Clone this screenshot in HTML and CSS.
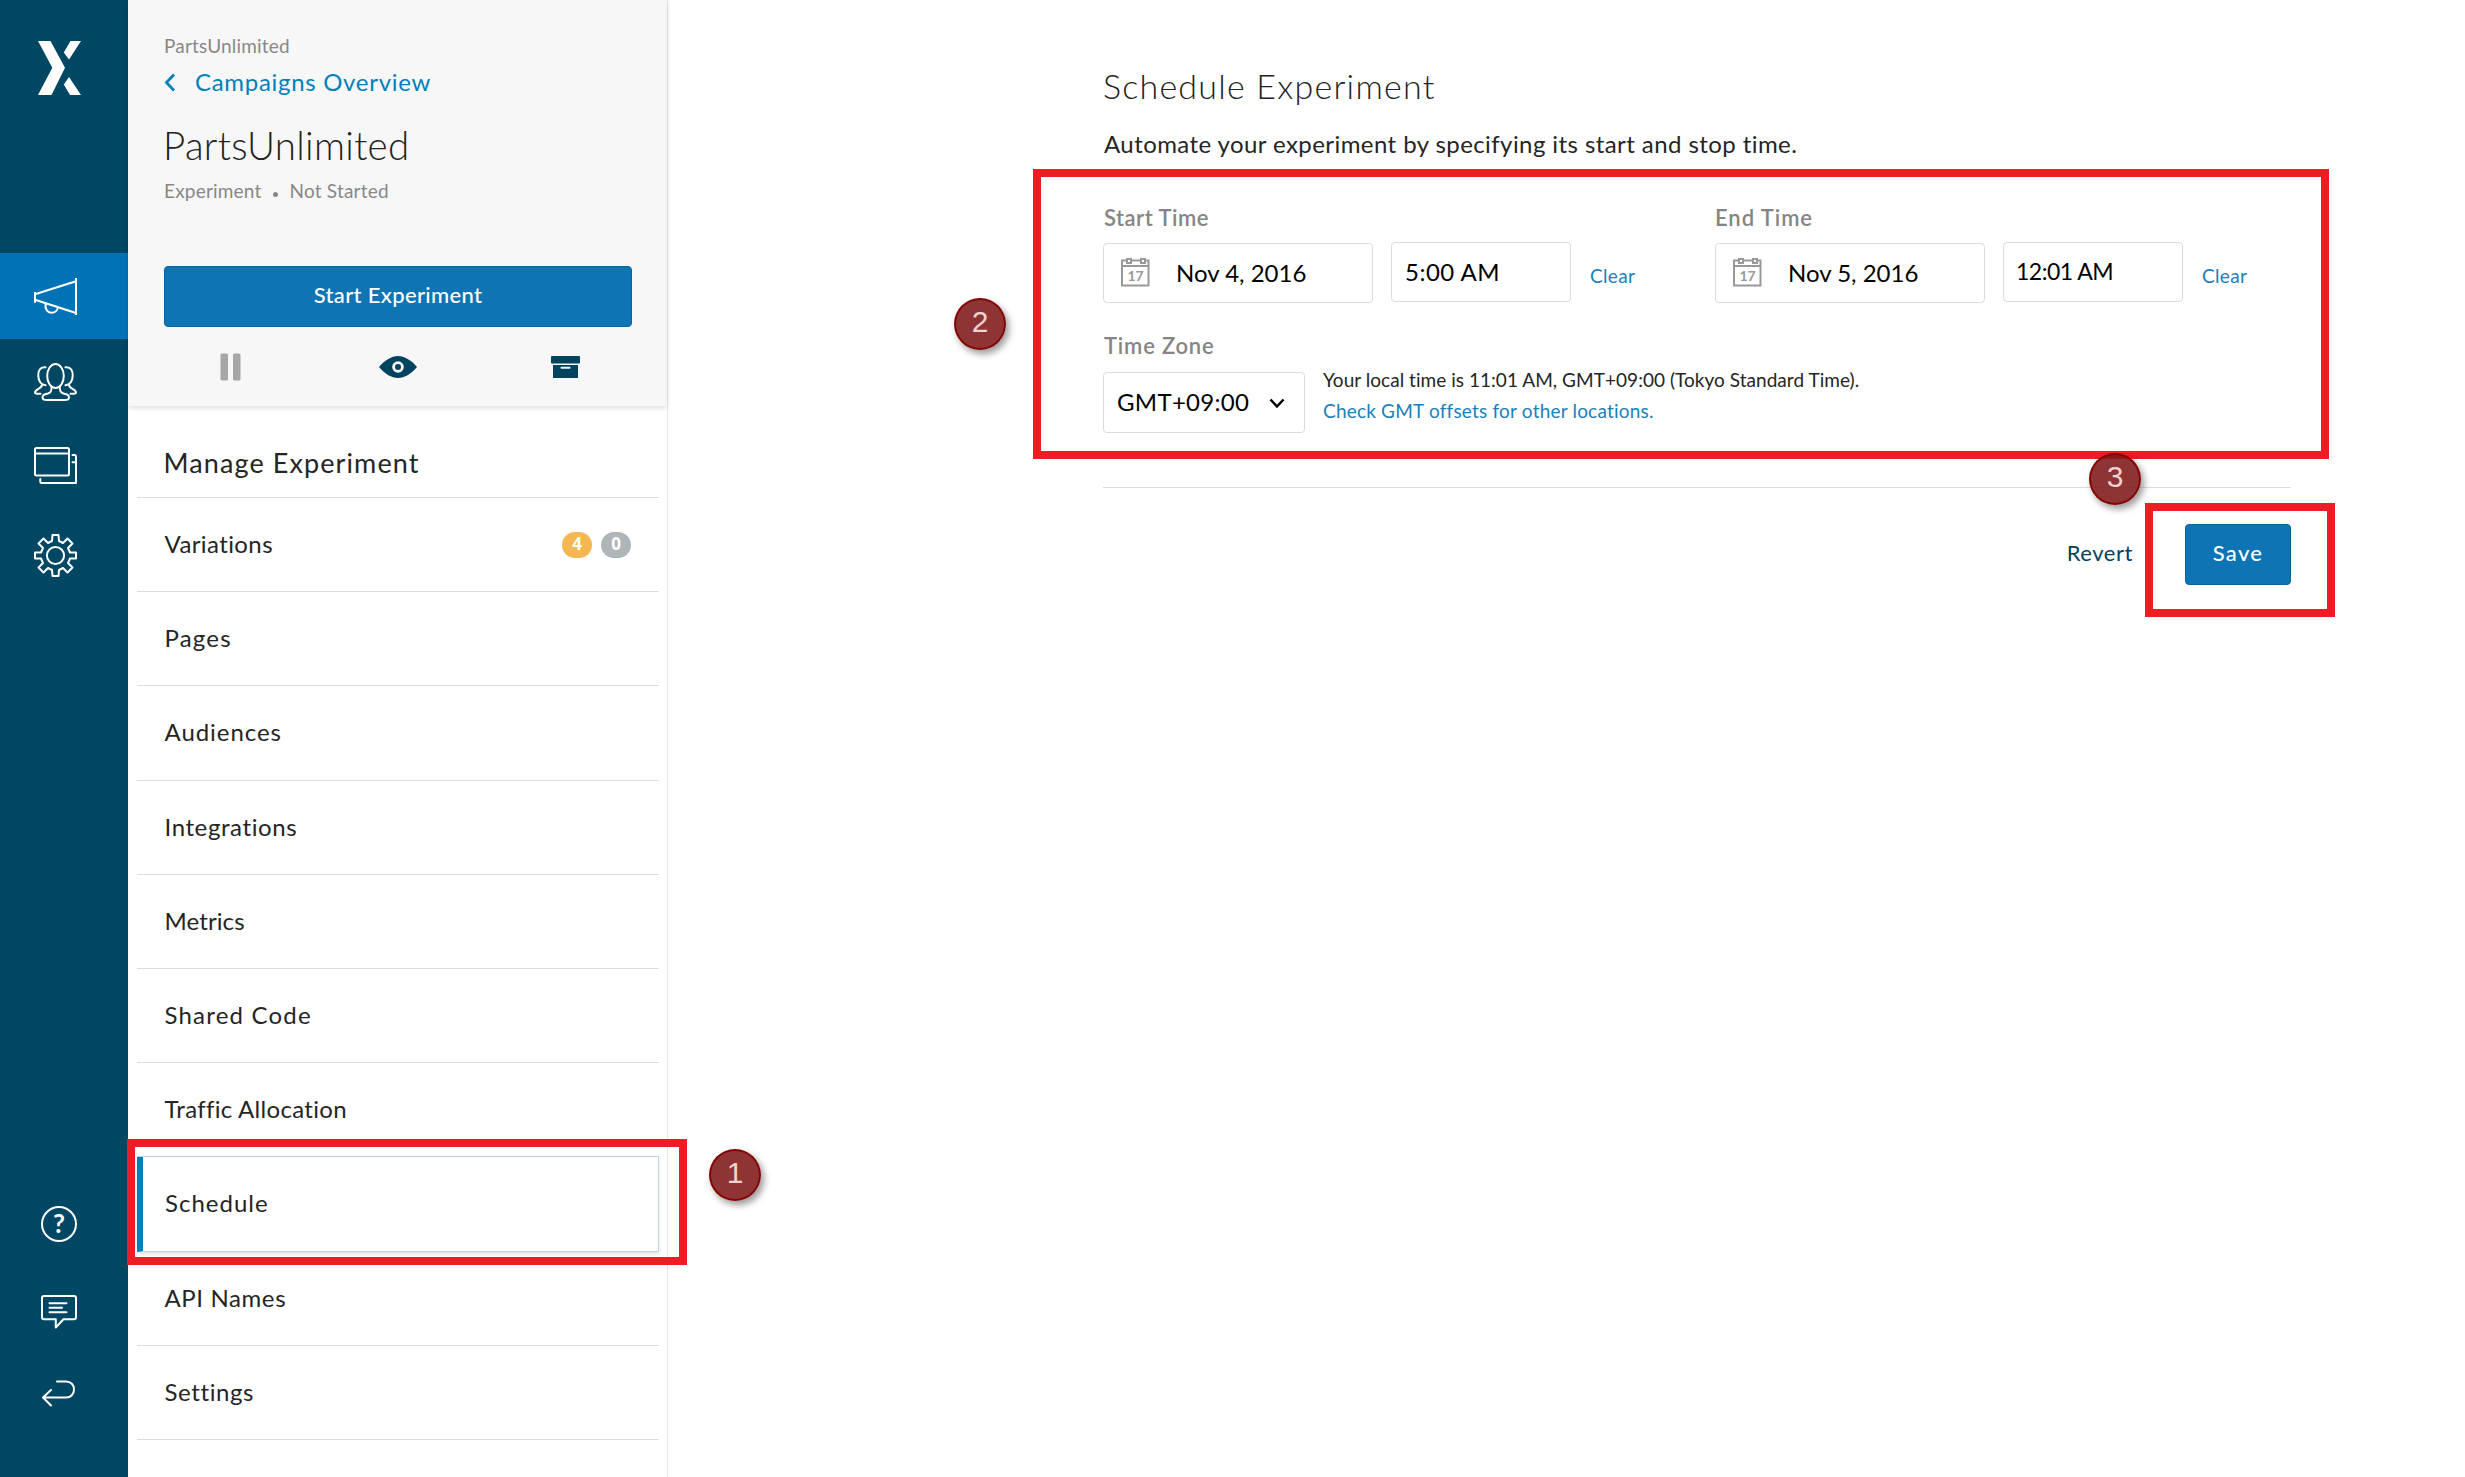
FILE: index.html
```html
<!DOCTYPE html>
<html lang="en">
<head>
<meta charset="utf-8">
<title>Schedule Experiment</title>
<link rel="stylesheet" href="styles.css">
</head>
<body>
<div class="app">
  <nav class="rail">
    <svg class="logo" width="43" height="54" viewBox="0 0 43 54" fill="#fff"><path d="M0 0H12.500L27 26.700 13.500 54H0L14.300 26.700Z"/><path d="M32.500 0H43L31 18.500 25.800 11.500Z"/><path d="M31 36L43 54H32L25.800 43.500Z"/></svg>
    <div class="rail-item rail-campaigns">
      <svg class="line" width="43" height="37" viewBox="0 0 43 37"><path d="M42 0V37M1 14V24.700M1 16.300L42 3.300M1 21.700L42 35M11.500 25.500C11 31.500 13.500 34.700 17.500 34.700 21 34.700 23.500 32.500 23.800 29.500"/></svg>
    </div>
    <div class="rail-item rail-audiences">
      <svg class="line" width="43" height="38" viewBox="0 0 43 38"><ellipse cx="21.500" cy="13" rx="8.300" ry="12"/><path d="M17.500 23.500C17.800 28 17 29.500 14 30.500 10 31.500 8.500 32 8.500 34.500 8.500 36.500 10 37 13 37H30.500C33.500 37 35 36.500 35 34.500 35 32 33.500 31.500 29.500 30.500 26.500 29.500 25.500 28 25.800 23.500M11.500 4.300C6 3.500 4 8 4.300 13 4.500 17.500 6.500 21.500 11.500 22.300M8 21.500C8.500 26 1 25.500 1 29.500 1 30.700 2 30.700 6.500 30.700M31.500 4.300C37 3.500 39 8 38.700 13 38.500 17.500 36.500 21.500 31.500 22.300M35 21.500C34.500 26 42 25.500 42 29.500 42 30.700 41 30.700 36.500 30.700"/></svg>
    </div>
    <div class="rail-item rail-pages">
      <svg class="line" width="43" height="38" viewBox="0 0 43 38"><rect x="1" y="1" width="34" height="27.500" rx="1.500"/><path d="M1 6.500H35M38.500 8H40.500Q42 8 42 10V36H8Q6.300 36 6.300 34.500V32M38.500 15.300H42"/></svg>
    </div>
    <div class="rail-item rail-settings">
      <svg class="line" width="43" height="43" viewBox="-21.500 -21.500 43 43"><circle r="8.600"/><path d="M-3-20.500H3L3.500-14.500 7.500-12.500 12-17 17-12 12.500-7.500 14.500-3H20.500V3H14.500L12.500 7.500 17 12 12 17 7.500 12.500 3.500 14.500 3 20.500H-3L-3.500 14.500-7.500 12.500-12 17-17 12-12.500 7.500-14.500 3H-20.500V-3H-14.500L-12.500-7.500-17-12-12-17-7.500-12.500-3.500-14.500Z"/></svg>
    </div>
    <div class="rail-foot">
      <svg class="line" width="36" height="36" viewBox="0 0 36 36"><circle cx="18" cy="18" r="17"/><text class="help-mark" x="18" y="27">?</text></svg>
      <svg class="line" width="36" height="34" viewBox="0 0 36 34"><path d="M3 1H33Q35 1 35 3V22.300Q35 24.300 33 24.300H22.500L14.800 32.500V24.300H3Q1 24.300 1 22.300V3Q1 1 3 1ZM8.500 8.300H25.500M8.500 12.800H21M8.500 17.300H25.500"/></svg>
      <svg class="line" width="36" height="27" viewBox="0 0 36 27"><path d="M16 1.500H25C30 1.500 33 5 33 9.500 33 14 30 17.500 25 17.500H2M10 10L2 17.500 10 25.500"/></svg>
    </div>
  </nav>

  <aside class="panel">
    <header class="panel-head">
      <div class="project">PartsUnlimited</div>
      <a class="back"><svg width="12" height="19" viewBox="0 0 12 19"><path d="M10 1.500L2.500 9.500 10 17.500"/></svg><span>Campaigns Overview</span></a>
      <h1 class="name">PartsUnlimited</h1>
      <div class="meta"><span>Experiment</span><i class="dot"></i><span>Not Started</span></div>
      <button class="btn start">Start Experiment</button>
      <div class="tools">
        <svg width="22" height="28" viewBox="0 0 22 28" fill="#a6a6a6"><rect x=".5" y=".5" width="7.500" height="27" rx="1.500"/><rect x="13" y=".5" width="7.500" height="27" rx="1.500"/></svg>
        <svg class="eye" width="38" height="22" viewBox="0 0 38 22"><path fill="#00435f" d="M0 11C6 4 12.500 0 19 0S32 4 38 11C32 18 25.500 22 19 22S6 18 0 11Z"/><circle cx="19" cy="11" r="4.400" fill="none" stroke="#f7f7f7" stroke-width="2.800"/></svg>
        <svg width="29" height="23" viewBox="0 0 29 23" fill="#00435f"><rect y="0" width="29" height="7.500" rx="1"/><path d="M2 9H27V22H2Z"/><path d="M10.500 11.800H18.500" stroke="#f7f7f7" stroke-width="2" stroke-linecap="round"/></svg>
      </div>
    </header>
    <h2 class="manage">Manage Experiment</h2>
    <ul class="menu">
      <li class="ls-04"><span>Variations</span><span class="counts"><b class="count count-live">4</b><b class="count">0</b></span></li>
      <li class="ls-12">Pages</li>
      <li class="ls-09">Audiences</li>
      <li class="ls-06">Integrations</li>
      <li class="ls-01">Metrics</li>
      <li class="ls-12">Shared Code</li>
      <li class="ls-03 before-current">Traffic Allocation</li>
      <li class="ls-10 current">Schedule</li>
      <li class="ls-06">API Names</li>
      <li class="ls-06">Settings</li>
    </ul>
  </aside>

  <main class="main">
    <h2 class="title">Schedule Experiment</h2>
    <p class="lead">Automate your experiment by specifying its start and stop time.</p>
    <div class="times">
      <section>
        <div class="label">Start Time</div>
        <div class="fields">
          <div class="field date"><svg width="29" height="29" viewBox="0 0 29 29"><path d="M1 2.500H27.500V27.500H1ZM1 8H27.500"/><rect class="ring" x="6" y="1" width="4" height="4"/><rect class="ring" x="20" y="1" width="4" height="4"/><text x="14.500" y="23">17</text></svg><span>Nov 4, 2016</span></div>
          <div class="field time">5:00 AM</div>
          <a class="clear">Clear</a>
        </div>
      </section>
      <section>
        <div class="label label-end">End Time</div>
        <div class="fields">
          <div class="field date"><svg width="29" height="29" viewBox="0 0 29 29"><path d="M1 2.500H27.500V27.500H1ZM1 8H27.500"/><rect class="ring" x="6" y="1" width="4" height="4"/><rect class="ring" x="20" y="1" width="4" height="4"/><text x="14.500" y="23">17</text></svg><span>Nov 5, 2016</span></div>
          <div class="field time time-end">12:01 AM</div>
          <a class="clear">Clear</a>
        </div>
      </section>
    </div>
    <div class="label label-zone">Time Zone</div>
    <div class="zone">
      <div class="field select"><span>GMT+09:00</span><svg width="16" height="11" viewBox="0 0 16 11"><path d="M1.500 1.500L8 8.500 14.500 1.500"/></svg></div>
      <div class="note"><div>Your local time is 11:01 AM, GMT+09:00 (Tokyo Standard Time).</div><a>Check GMT offsets for other locations.</a></div>
    </div>
    <div class="actions"><a class="revert">Revert</a><button class="btn save">Save</button></div>
  </main>

  <div class="mark mark-schedule"></div>
  <div class="mark mark-times"></div>
  <div class="mark mark-save"></div>
  <div class="step step-1">1</div>
  <div class="step step-2">2</div>
  <div class="step step-3">3</div>
</div>
</body>
</html>
```
FILE: styles.css
```css
* { box-sizing: border-box; }
body { margin: 0; background: #fff; color: #252525; font-family: Lato, "Open Sans", sans-serif; font-size: 24px; }
h1, h2, p, ul { margin: 0; padding: 0; font-weight: 400; }
svg { display: block; flex: none; }
.app { position: relative; display: flex; width: 2465px; height: 1477px; overflow: hidden; }

/* Icon rail */
.rail { width: 128px; flex: none; display: flex; flex-direction: column; background: #004764; padding-top: 41px; }
.logo { margin: 0 0 158px 38px; }
.line { fill: none; stroke: #fff; stroke-width: 2; stroke-linejoin: round; stroke-linecap: round; }
.rail-item { padding-left: 34px; }
.rail-campaigns { height: 86px; padding-top: 25px; background: #0073b7; }
.rail-campaigns .line { stroke-linecap: butt; }
.rail-audiences { padding-top: 24px; }
.rail-pages { padding-top: 46px; }
.rail-settings { padding-top: 49px; }
.rail-foot { margin-top: auto; padding: 0 0 70px 41px; display: flex; flex-direction: column; gap: 52px; }
.rail-foot svg:nth-child(2) { margin: 1px 0 -1px; }
.help-mark { fill: #fff; stroke: none; font: 700 26px Lato, sans-serif; text-anchor: middle; }

/* Experiment panel */
.panel { width: 540px; flex: none; border-right: 1px solid #e6e6e6; }
.panel-head { height: 406px; padding: 34px 35px 0 36px; background: #f7f7f7; box-shadow: 0 2px 5px rgba(0, 0, 0, .13); display: flex; flex-direction: column; }
.project, .meta { font-size: 19px; line-height: 24px; color: #888; letter-spacing: .2px; }
.back { display: flex; align-items: center; margin-top: 9px; line-height: 30px; color: #0081ba; letter-spacing: .7px; }
.back svg { fill: none; stroke: #0081ba; stroke-width: 2.800; margin-right: 19px; }
.name { margin-top: 25px; font-size: 38.500px; font-weight: 300; line-height: 46px; letter-spacing: .3px; color: #222; text-indent: -1px; }
.meta { display: flex; align-items: center; margin-top: 11px; }
.dot { width: 5px; height: 5px; margin: 6px 12px 0 11px; border-radius: 50%; background: #888; }
.btn { border: 1px solid #0a659f; border-radius: 4px; background: #0f74b3; color: #fff; font: 500 22px Lato, sans-serif; height: 61px; padding: 0 0 4px; letter-spacing: .34px; }
.start { margin-top: 63px; width: 468px; }
.tools { display: flex; align-items: center; justify-content: space-between; margin: 26px 52px 0 56px; }
.eye { margin: 0 -1px 0 1px; }
.manage { height: 92px; margin: 0 8px 0 9px; padding: 41px 0 0 26.500px; border-bottom: 1px solid #ddd; font-size: 27px; line-height: 32px; letter-spacing: 1.100px; }
.menu { list-style: none; margin: 0 8px 0 9px; }
.menu li { display: flex; align-items: center; justify-content: space-between; height: 94.200px; padding: 0 28px 2px 27.500px; border-bottom: 1px solid #ddd; }
.menu .before-current { border-color: #c8d2e6; }
.menu .current { border: 1px solid #c8d2e6; border-top: 0; border-left: 6px solid #0081ba; padding-left: 22px; box-shadow: 0 2px 4px rgba(0, 0, 0, .12); }
.ls-01 { letter-spacing: .1px; }
.ls-03 { letter-spacing: .3px; }
.ls-04 { letter-spacing: .4px; }
.ls-06 { letter-spacing: .6px; }
.ls-09 { letter-spacing: .95px; }
.ls-10 { letter-spacing: 1px; }
.ls-12 { letter-spacing: 1.200px; }
.counts { display: flex; gap: 9px; padding-top: 2px; }
.count { width: 30px; height: 26px; border-radius: 13px; background: #b0b5b9; color: #fff; font: 700 17px/23px "Open Sans", sans-serif; text-align: center; letter-spacing: 0; }
.count-live { background: #f4b752; }

/* Schedule form */
.main { flex: none; margin-left: 435px; width: 1188px; padding-top: 66px; }
.title { font-size: 34px; font-weight: 300; line-height: 40px; letter-spacing: 1.220px; color: #222; }
.lead { margin-top: 23px; line-height: 30px; letter-spacing: .42px; padding-left: 1px; white-space: nowrap; }
.times { display: flex; margin-top: 46px; }
.times section { width: 612px; flex: none; }
.label { font-size: 22px; font-weight: 600; line-height: 26px; color: #858585; letter-spacing: .5px; padding-left: 1px; }
.label-end { letter-spacing: .95px; padding-left: 0; }
.label-zone { margin-top: 30px; letter-spacing: .8px; }
.fields { display: flex; align-items: flex-start; margin-top: 11px; }
.field { display: flex; align-items: center; height: 60px; border: 1px solid #dcdcdc; border-radius: 4px; color: #000; padding-bottom: 2px; }
.date { width: 270px; margin-top: 1px; padding-left: 17px; letter-spacing: 0; }
.date svg { fill: none; stroke: #999; stroke-width: 2; margin: 1px 26px 0 0; }
.date svg text { fill: #999; stroke: none; font: 700 14px Lato, sans-serif; text-anchor: middle; letter-spacing: 0; }
.date .ring { fill: #fff; }
.time { width: 180px; margin-left: 18px; padding-left: 13px; letter-spacing: .5px; }
.time-end { font-size: 23px; letter-spacing: -.5px; padding-left: 12px; }
.clear { margin: 19px 0 0 19px; font-size: 19px; line-height: 30px; letter-spacing: .34px; color: #1b7fb9; }
.zone { display: flex; margin-top: 13px; }
.select { width: 202px; height: 61px; padding: 0 19px 3px 13px; justify-content: space-between; letter-spacing: .3px; }
.select svg { fill: none; stroke: #000; stroke-width: 2.500; margin-top: 4px; }
.note { margin: -8px 0 0 18px; font-size: 19px; line-height: 31px; }
.note div { letter-spacing: .04px; }
.note a { color: #1b7fb9; letter-spacing: .2px; }
.actions { display: flex; justify-content: flex-end; align-items: center; margin-top: 54px; padding-top: 36px; border-top: 1px solid #ddd; }
.revert { font-size: 22px; letter-spacing: .55px; color: #00435f; margin: -4px 52px 0 0; }
.save { width: 106px; letter-spacing: 1.300px; }

/* Walkthrough annotations laid over the page */
.mark { position: absolute; border: 8px solid #ee1c24; }
.mark-schedule { left: 127px; top: 1139px; width: 560px; height: 126px; }
.mark-times { left: 1033px; top: 169px; width: 1296px; height: 290px; }
.mark-save { left: 2145px; top: 503px; width: 190px; height: 114px; }
.step { position: absolute; width: 52px; height: 52px; border-radius: 50%; border: 2px solid rgba(130, 0, 0, .9); background: rgba(128, 24, 24, .88); box-shadow: 3px 4px 7px rgba(0, 0, 0, .4); color: #eed3d3; font: 30px/44px "Liberation Sans", sans-serif; text-align: center; }
.step-1 { left: 709px; top: 1149px; }
.step-2 { left: 954px; top: 298px; }
.step-3 { left: 2089px; top: 453px; }
```
